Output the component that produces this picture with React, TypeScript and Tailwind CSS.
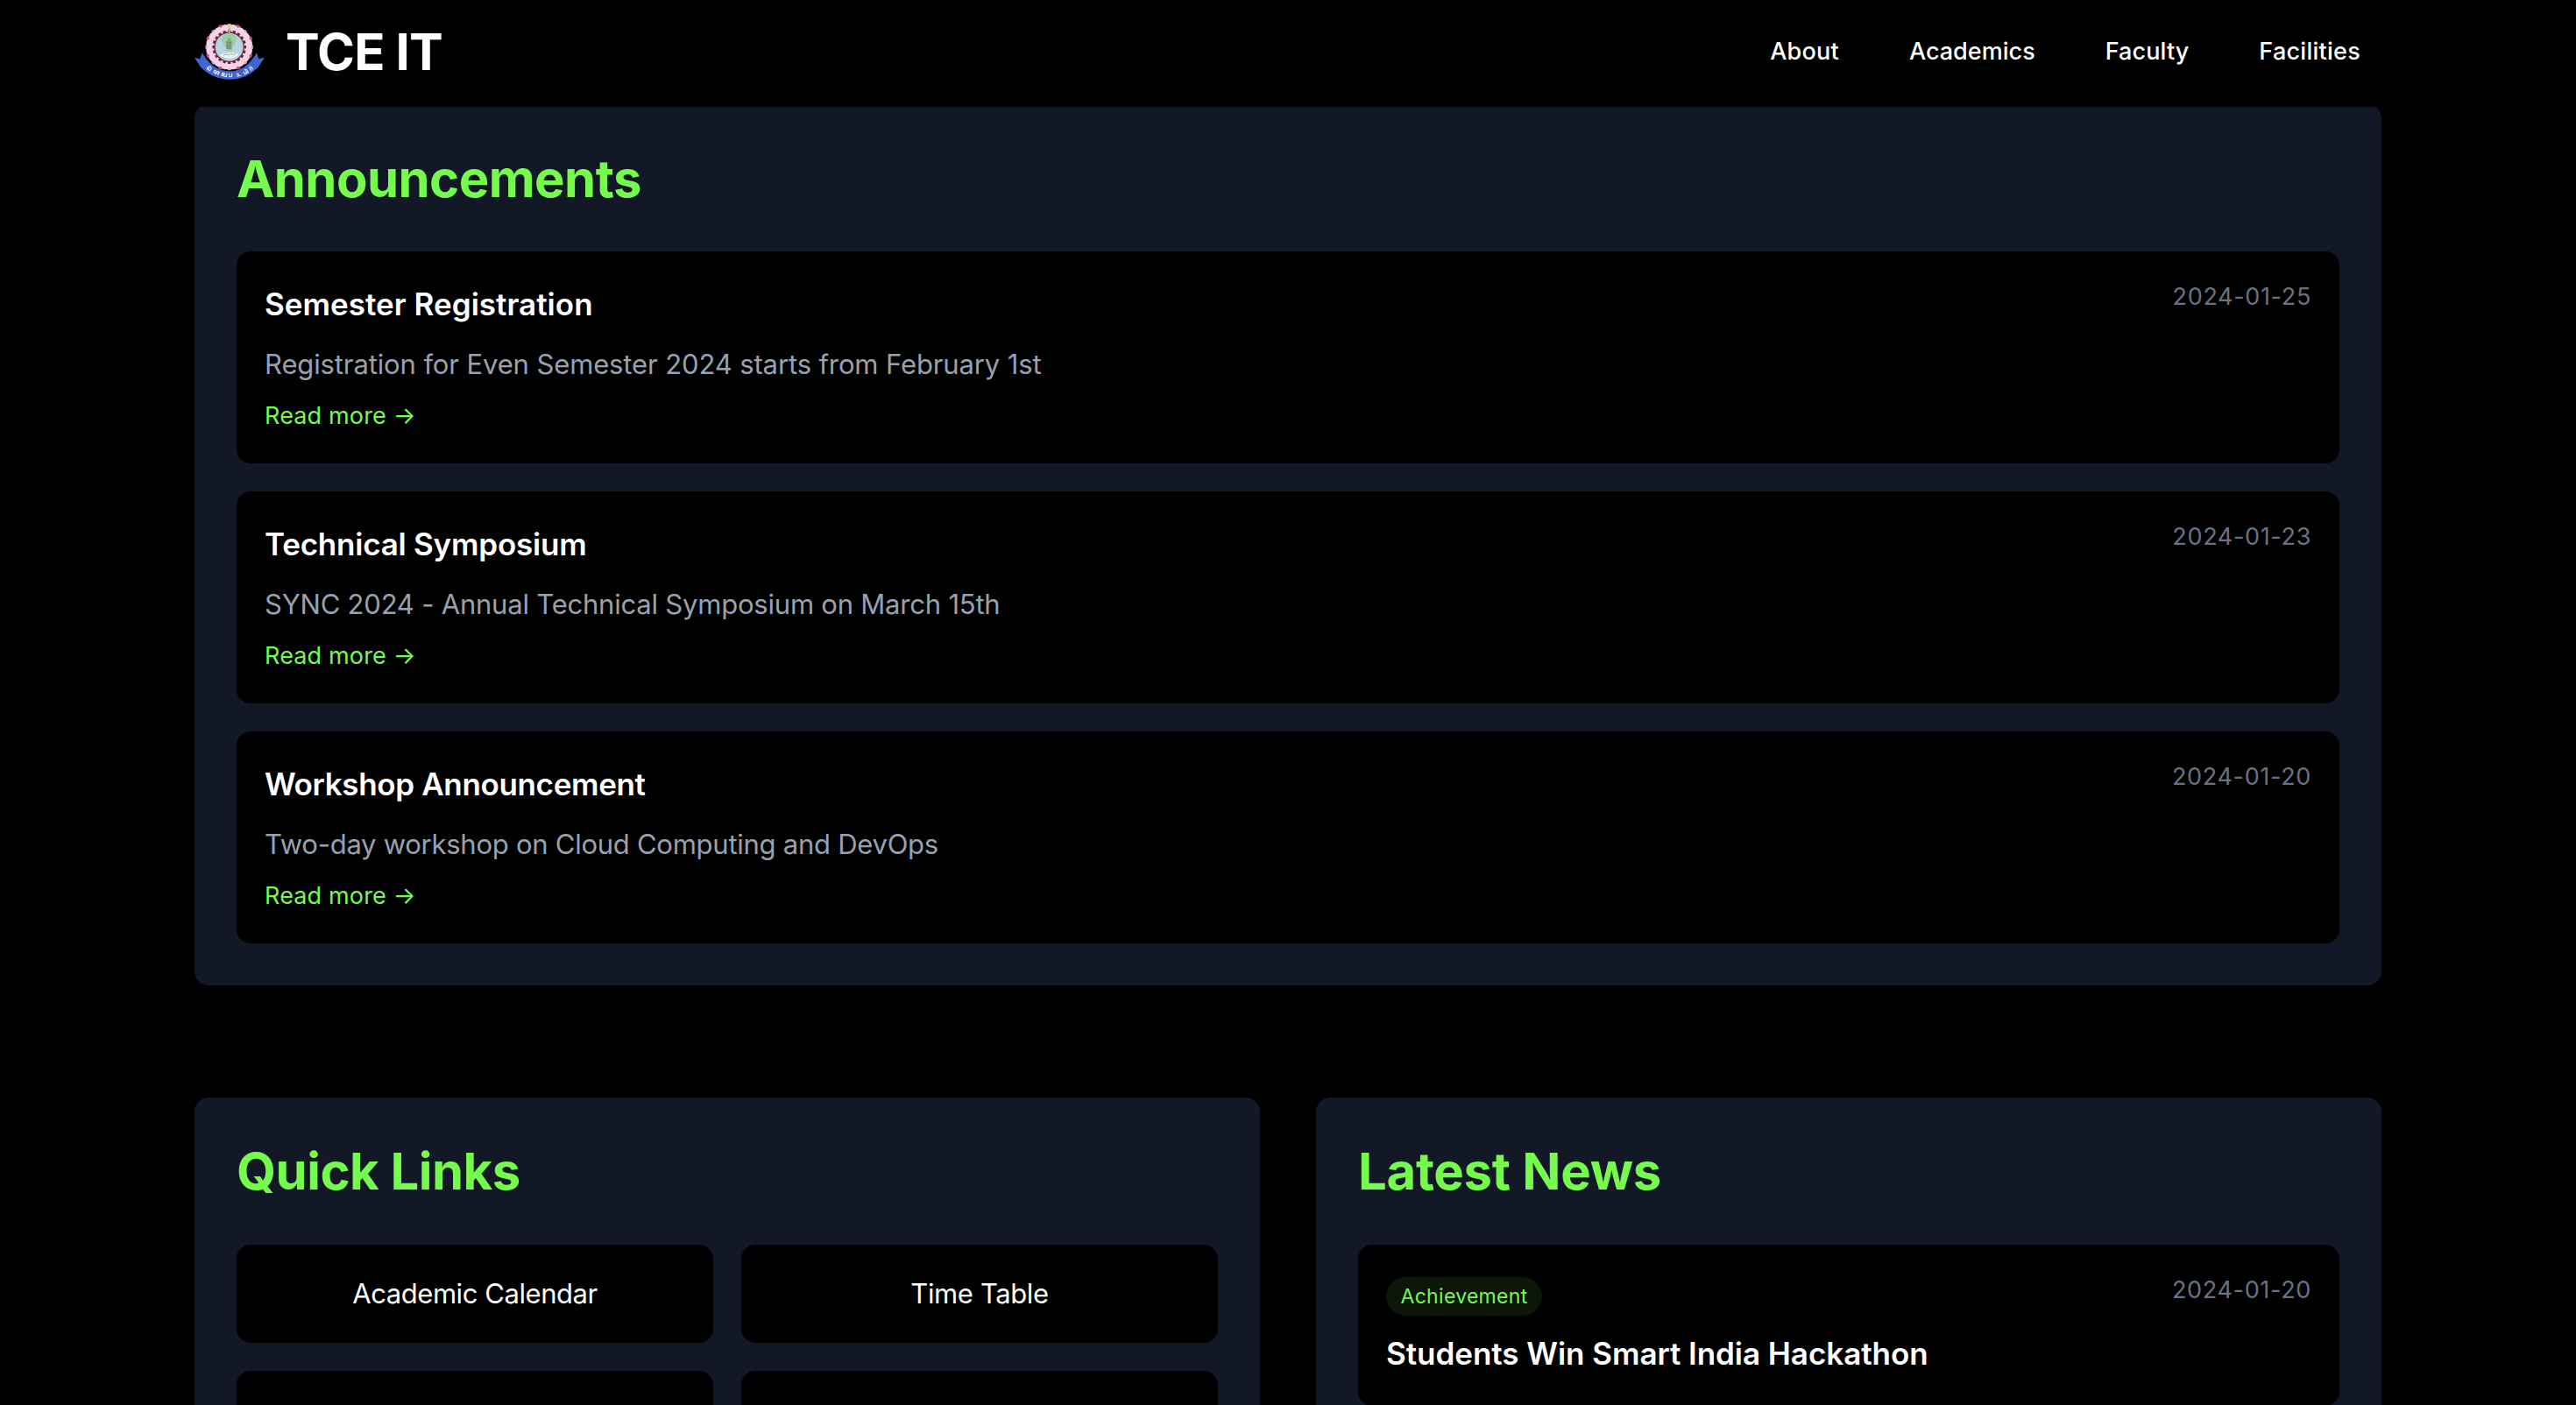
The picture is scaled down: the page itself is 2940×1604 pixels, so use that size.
interface NavItem {
  label: string;
  tracking: string;
}

interface Announcement {
  title: string;
  titleTracking: string;
  text: string;
  textTracking: string;
  date: string;
}

const navItems: NavItem[] = [
  { label: 'About', tracking: 'tracking-[0.25px]' },
  { label: 'Academics', tracking: 'tracking-[0.02px]' },
  { label: 'Faculty', tracking: 'tracking-[0.1px]' },
  { label: 'Facilities', tracking: 'tracking-[0.26px]' },
];

const announcements: Announcement[] = [
  {
    title: 'Semester Registration',
    titleTracking: 'tracking-[0.03px]',
    text: 'Registration for Even Semester 2024 starts from February 1st',
    textTracking: 'tracking-[-0.12px]',
    date: '2024-01-25',
  },
  {
    title: 'Technical Symposium',
    titleTracking: 'tracking-[-0.22px]',
    text: 'SYNC 2024 - Annual Technical Symposium on March 15th',
    textTracking: 'tracking-[-0.21px]',
    date: '2024-01-23',
  },
  {
    title: 'Workshop Announcement',
    titleTracking: 'tracking-[-0.34px]',
    text: 'Two-day workshop on Cloud Computing and DevOps',
    textTracking: 'tracking-[-0.26px]',
    date: '2024-01-20',
  },
];

const ribbonMarks = [
  { x: 64, y: 167, turn: 36, d: 'M-7 5q-4-7 1-8t2 8h8v-10q-6-5-10-2' },
  { x: 88, y: 179, turn: 24, d: 'M-9 5q-3-9 2-9t2 9h5v-9q5-3 6 1v8M8-4v9' },
  { x: 112, y: 187, turn: 10, d: 'M-9 3a3 3 0 1 0 3-5q0-5 4-4v11M2-6v11h8v-11' },
  { x: 135, y: 189, turn: 0, d: 'M-6-5q4-2 3 3t-2 7h10v-11' },
  { x: 163, y: 187, turn: -14, d: 'M-6-3q5-4 6 1t-6 6h12' },
  { x: 188, y: 177, turn: -28, d: 'M-7-4v9h8v-10M1 5h5v-9q-3-6-7-4' },
  { x: 206, y: 165, turn: -38, d: 'M-4 6v-10h7v10M0-9v1' },
];

function Crest() {
  const petals = Array.from({ length: 16 }, (_, i) => (i * Math.PI) / 8);
  const teeth = Array.from({ length: 20 }, (_, i) => i * 18);
  return (
    <svg viewBox="0 0 264 216" className="h-[72px] w-[88px] shrink-0" aria-hidden="true">
      {petals.map((a, i) => (
        <circle key={i} cx={131 + 73 * Math.sin(a)} cy={92 - 71 * Math.cos(a)} r={i % 2 ? 11 : 9} fill={i % 2 ? '#c04f78' : '#dca6c2'} />
      ))}
      {petals.map((a, i) => (
        <circle key={i} cx={131 + 63 * Math.sin(a + 0.2)} cy={92 - 61 * Math.cos(a + 0.2)} r="17" fill="#f3d3e9" />
      ))}
      <circle cx="131" cy="92" r="66" fill="#f3d3e9" />
      {teeth.map((deg) => (
        <rect key={deg} x="126" y="34" width="10" height="12" fill="#702832" transform={`rotate(${deg} 131 92)`} />
      ))}
      <circle cx="131" cy="92" r="52" fill="#702832" />
      <circle cx="131" cy="92" r="48" fill="#b5d3e2" />
      <path d="M106 54 Q118 46 131 48 Q150 46 157 60 L153 78 L143 92 L140 106 L124 108 L118 92 L107 76Z" fill="#98d39c" />
      <path d="M127 25h8l-2 18v22h-5V43z" fill="#b4b5a6" />
      <path d="M131 12q7 7 4 14h-8q-3-7 4-14z" fill="#e6d45c" />
      <path d="M126 62h10v9h4v29h-20V71h6z" fill="#86a38e" />
      <path d="M122 78h16M122 88h16M122 96h16" stroke="#65806f" strokeWidth="2.5" />
      <path d="M97 120q12-9 25-6 18-8 42 1l-9 11q-23 9-46 0z" fill="#eef3f2" />
      <path d="M110 121l9-4 8 3 10-6 8 4 9-3" fill="none" stroke="#8a9a9c" strokeWidth="2.5" />
      <path d="M12 128l19 5 7-21 13 19q34 44 81 44t80-44l13-19 7 21 20-5-22 33q-41 42-98 42t-99-42z" fill="#3e64d4" />
      {ribbonMarks.map((m) => (
        <path
          key={m.x}
          d={m.d}
          transform={`translate(${m.x} ${m.y}) rotate(${m.turn})`}
          fill="none"
          stroke="#f1f4ff"
          strokeWidth="3"
          strokeLinecap="round"
          strokeLinejoin="round"
        />
      ))}
    </svg>
  );
}

function Header() {
  return (
    <header className="h-[122px] bg-black">
      <div className="mx-auto flex h-[118px] w-[2496px] items-center justify-between">
        <div className="flex items-center gap-5">
          <div className="-ml-1 flex">
            <Crest />
          </div>
          <span className="text-[58px] leading-[72px] font-bold tracking-[-0.8px]">TCE IT</span>
        </div>
        <nav className="mr-6 mb-px flex items-center gap-20">
          {navItems.map((item) => (
            <a key={item.label} href="#" className={`text-[27px] leading-10 font-medium ${item.tracking}`}>
              {item.label}
            </a>
          ))}
        </nav>
      </div>
    </header>
  );
}

function AnnouncementCard({ item }: { item: Announcement }) {
  return (
    <article className="flex h-[242px] items-start justify-between rounded-2xl bg-black p-8">
      <div>
        <h3 className={`text-[35px] leading-[56px] font-semibold ${item.titleTracking}`}>{item.title}</h3>
        <p className={`mt-4 text-[31px] leading-[49px] text-gray-400 ${item.textTracking}`}>{item.text}</p>
        <a href="#" className="mt-[15px] block text-[27px] leading-10 tracking-[0.15px] text-[#75fb4c]">
          Read more →
        </a>
      </div>
      <time className="text-[27px] leading-10 tracking-[0.66px] text-gray-500">{item.date}</time>
    </article>
  );
}

export default function App() {
  return (
    <div className="h-[1604px] overflow-hidden bg-black font-['Inter',sans-serif] text-white">
      <Header />
      <main className="mx-auto w-[2496px]">
        <section className="-mt-[3px] rounded-2xl bg-[#121826] p-12 [clip-path:inset(3px_0_0_0)]">
          <h2 className="mb-[46px] text-[58px] leading-[74px] font-bold tracking-[-0.54px] text-[#75fb4c]">Announcements</h2>
          <div className="flex flex-col gap-8">
            {announcements.map((item) => (
              <AnnouncementCard key={item.title} item={item} />
            ))}
          </div>
        </section>

        <div className="mt-32 grid grid-cols-2 gap-16">
          <section className="rounded-2xl bg-[#121826] p-12">
            <h2 className="mb-[47px] text-[58px] leading-[73px] font-bold tracking-[-0.5px] text-[#75fb4c]">Quick Links</h2>
            <div className="grid grid-cols-2 gap-8">
              <a href="#" className="rounded-2xl bg-black p-8 text-center text-[31px] leading-[48px] tracking-[-0.43px]">
                Academic Calendar
              </a>
              <a href="#" className="rounded-2xl bg-black p-8 text-center text-[31px] leading-[48px] tracking-[-0.39px]">
                Time Table
              </a>
              <div className="h-28 rounded-2xl bg-black" />
              <div className="h-28 rounded-2xl bg-black" />
            </div>
          </section>

          <section className="rounded-2xl bg-[#121826] p-12">
            <h2 className="mb-[47px] text-[58px] leading-[73px] font-bold tracking-[-0.27px] text-[#75fb4c]">Latest News</h2>
            <article className="flex h-[184px] items-start justify-between rounded-2xl bg-black p-8">
              <div>
                <span className="mt-[5px] flex h-11 w-[178px] items-center justify-center rounded-full bg-[#0c1708] text-[23px] tracking-[0.3px] text-[#75fb4c]">
                  Achievement
                </span>
                <h3 className="mt-[15px] text-[35px] leading-[56px] font-semibold tracking-[-0.04px]">
                  Students Win Smart India Hackathon
                </h3>
              </div>
              <time className="text-[27px] leading-10 tracking-[0.66px] text-gray-500">2024-01-20</time>
            </article>
          </section>
        </div>
      </main>
    </div>
  );
}
